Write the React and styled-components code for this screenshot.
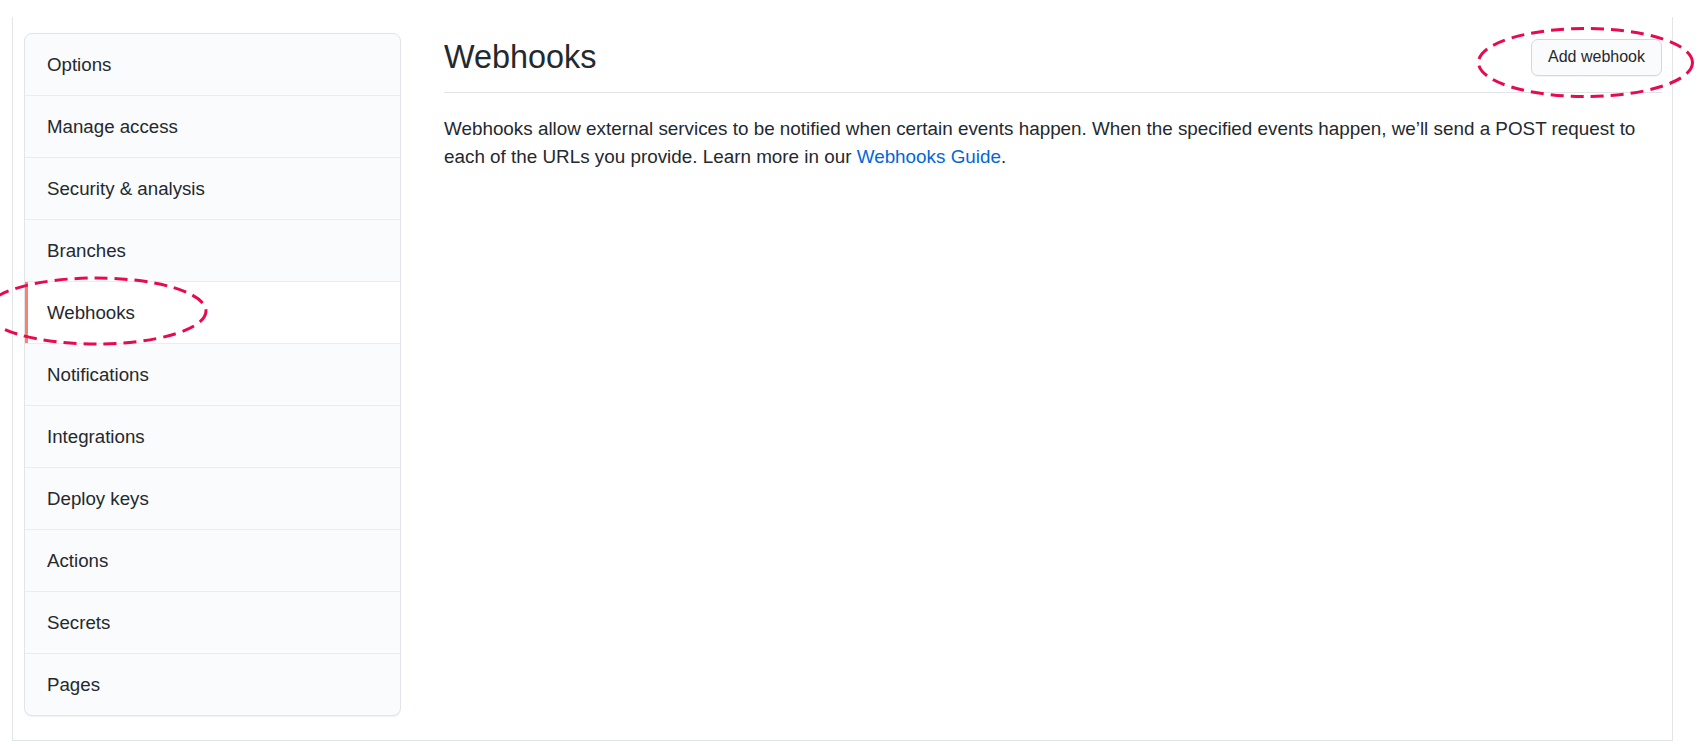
import styled, { createGlobalStyle } from "styled-components";

const GlobalStyle = createGlobalStyle`
  * { box-sizing: border-box; }
  body {
    margin: 0;
    background: #ffffff;
    font-family: "Liberation Sans", Arial, sans-serif;
    color: #24292e;
  }
`;

const Page = styled.div`
  position: relative;
  height: 744px;
  padding: 17px 33px 0 12px;
  overflow: hidden;
`;

const Frame = styled.div`
  display: flex;
  gap: 43px;
  height: 724px;
  padding: 16px 10px 0 11px;
  border: 1px solid #e1e4e8;
  border-top: none;
`;

const Sidebar = styled.nav`
  flex: 0 0 377px;
  align-self: flex-start;
  background: #fafbfc;
  border: 1px solid #e1e4e8;
  border-radius: 8px;
  box-shadow: 0 1px 1px rgba(27, 31, 35, 0.06);
  overflow: hidden;
`;

const MenuItem = styled.a`
  box-sizing: content-box;
  display: flex;
  align-items: center;
  height: 61px;
  padding: 0 22px;
  font-size: 18.7px;
  color: #24292e;
  text-decoration: none;
  background: ${(p) => (p.$active ? "#ffffff" : "transparent")};
  box-shadow: ${(p) => (p.$active ? "inset 3px 0 0 #f9826c" : "none")};
  & + & {
    border-top: 1px solid #eaecef;
  }
`;

const Main = styled.main`
  flex: 1;
`;

const Subhead = styled.div`
  display: flex;
  align-items: center;
  justify-content: space-between;
  padding-bottom: 11px;
  margin-bottom: 22px;
  border-bottom: 1px solid #e1e4e8;
`;

const Heading = styled.h2`
  margin: 0;
  font-size: 32.4px;
  font-weight: 400;
  line-height: 48px;
  color: #24292e;
`;

const Button = styled.button`
  height: 37px;
  padding: 0 16px;
  font-family: "Liberation Sans", Arial, sans-serif;
  font-size: 16px;
  color: #24292e;
  background: #fafbfc;
  border: 1px solid #d5d8db;
  border-radius: 7px;
  box-shadow: 0 1px 0 rgba(27, 31, 35, 0.04);
`;

const Text = styled.p`
  margin: 0;
  font-size: 18.85px;
  line-height: 28px;
  color: #24292e;
`;

const Link = styled.a`
  color: #0366d6;
  text-decoration: none;
`;

const Marks = styled.svg`
  position: absolute;
  left: 0;
  top: 0;
  width: 1706px;
  height: 744px;
  pointer-events: none;
`;

const items = [
  "Options",
  "Manage access",
  "Security & analysis",
  "Branches",
  "Webhooks",
  "Notifications",
  "Integrations",
  "Deploy keys",
  "Actions",
  "Secrets",
  "Pages",
];

const App = () => {
  return (
    <Page>
      <GlobalStyle />
      <Frame>
        <Sidebar>
          {items.map((name) => (
            <MenuItem key={name} $active={name === "Webhooks"}>
              {name}
            </MenuItem>
          ))}
        </Sidebar>
        <Main>
          <Subhead>
            <Heading>Webhooks</Heading>
            <Button>Add webhook</Button>
          </Subhead>
          <Text>
            Webhooks allow external services to be notified when certain events
            happen. When the specified events happen, we’ll send a POST request
            to each of the URLs you provide. Learn more in our{" "}
            <Link>Webhooks Guide</Link>.
          </Text>
        </Main>
      </Frame>
      {/* annotation ellipses drawn over the screenshot */}
      <Marks viewBox="0 0 1706 744">
        <g fill="none" stroke="#e8094f" strokeWidth="3" strokeDasharray="13 7">
          <ellipse cx="96" cy="311" rx="110" ry="33" />
          <ellipse cx="1585.5" cy="62.5" rx="107" ry="34" />
        </g>
      </Marks>
    </Page>
  );
};

export default App;
